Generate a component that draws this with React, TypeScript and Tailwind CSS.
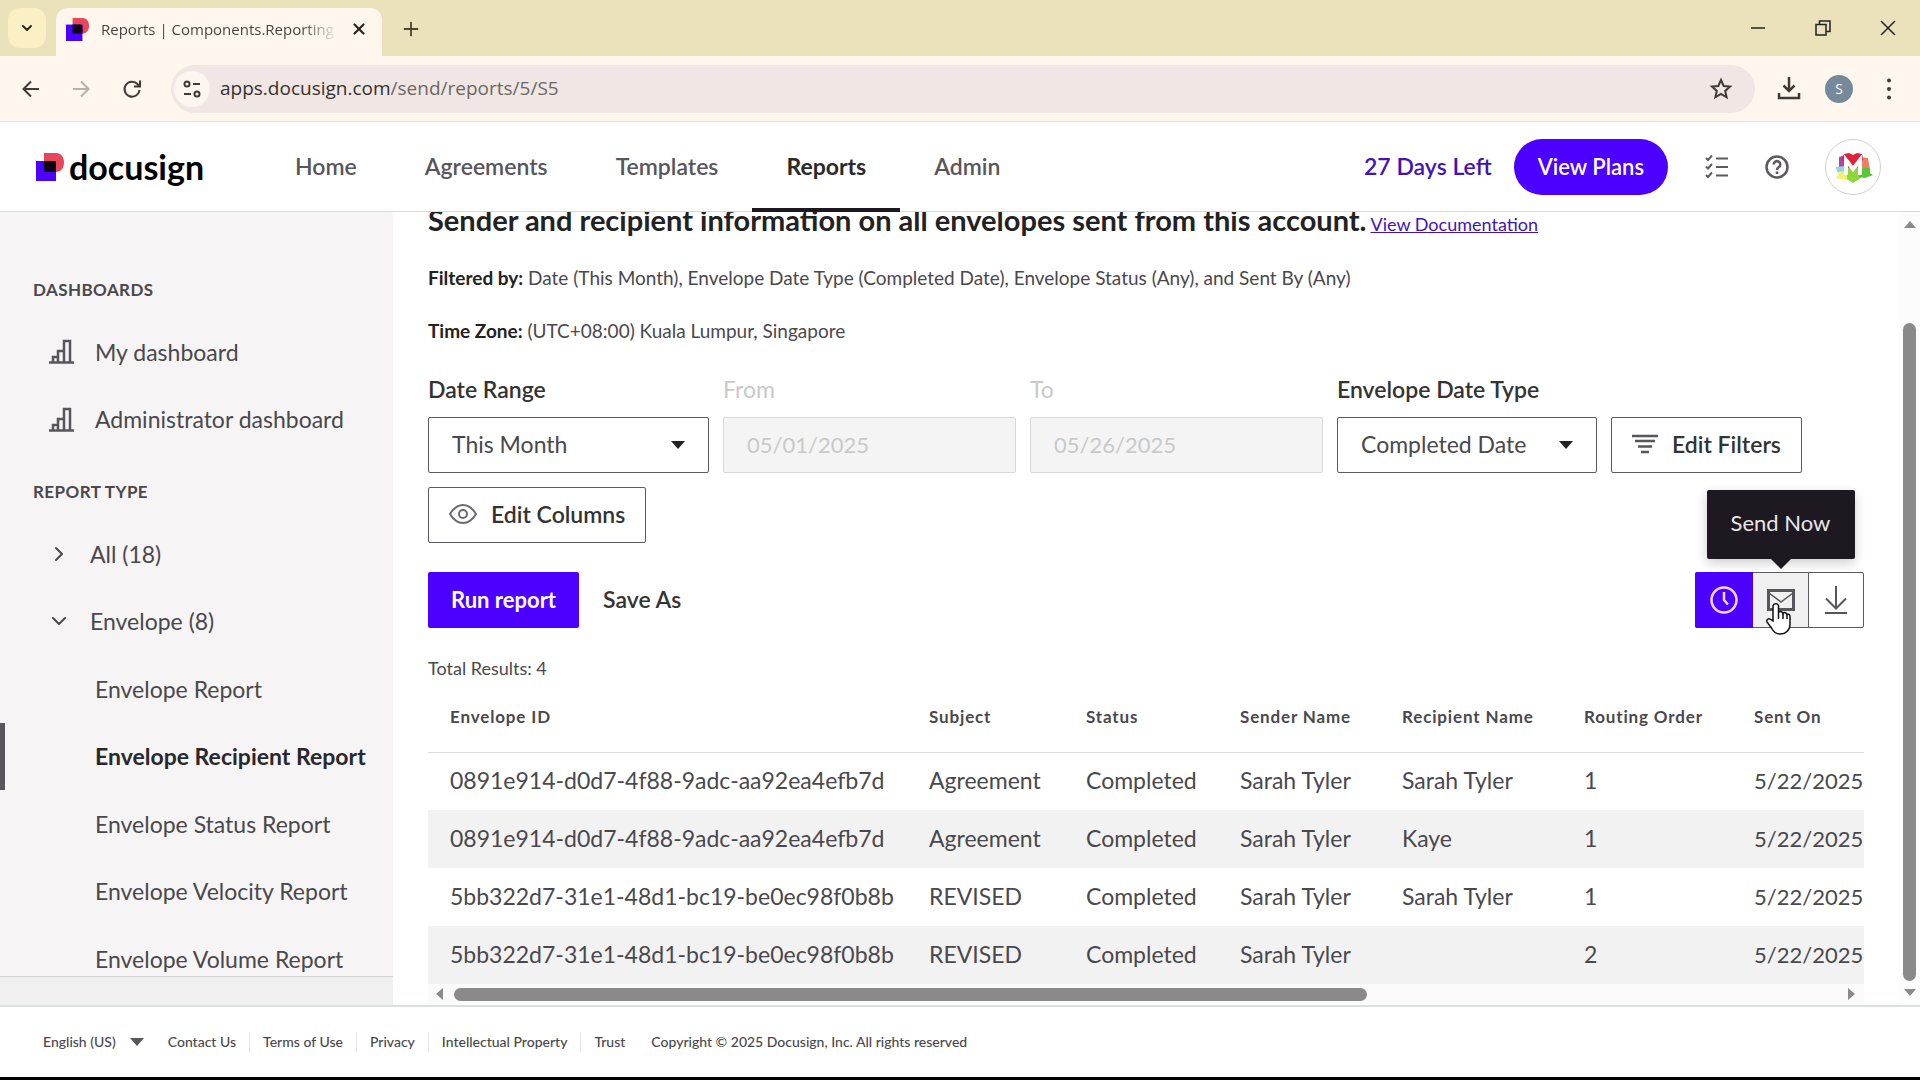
import type { ReactNode } from "react";
import { ChevronDown, ChevronRight, Plus, X } from "lucide-react";
import clsx from "clsx";

const navItems = ["Home", "Agreements", "Templates", "Reports", "Admin"];

const reports = [
  "Envelope Report",
  "Envelope Recipient Report",
  "Envelope Status Report",
  "Envelope Velocity Report",
  "Envelope Volume Report",
];

const columns = [
  { title: "Envelope ID", width: "w-[479px]" },
  { title: "Subject", width: "w-[157px]" },
  { title: "Status", width: "w-[154px]" },
  { title: "Sender Name", width: "w-[162px]" },
  { title: "Recipient Name", width: "w-[182px]" },
  { title: "Routing Order", width: "w-[170px]" },
  { title: "Sent On", width: "w-auto" },
];

const rows = [
  ["0891e914-d0d7-4f88-9adc-aa92ea4efb7d", "Agreement", "Completed", "Sarah Tyler", "Sarah Tyler", "1", "5/22/2025"],
  ["0891e914-d0d7-4f88-9adc-aa92ea4efb7d", "Agreement", "Completed", "Sarah Tyler", "Kaye", "1", "5/22/2025"],
  ["5bb322d7-31e1-48d1-bc19-be0ec98f0b8b", "REVISED", "Completed", "Sarah Tyler", "Sarah Tyler", "1", "5/22/2025"],
  ["5bb322d7-31e1-48d1-bc19-be0ec98f0b8b", "REVISED", "Completed", "Sarah Tyler", "", "2", "5/22/2025"],
];

const footerLinks = ["Contact Us", "Terms of Use", "Privacy", "Intellectual Property", "Trust"];

function LogoMark({ className }: { className: string }) {
  return (
    <svg viewBox="0 0 28 28" className={className} aria-hidden="true">
      <path d="M8 0h12c5 0 8 4 8 9.500s-3 9.500-8 9.500H8z" fill="#e8475a" />
      <path d="M0 8h20v20H0z" fill="#4c00ff" />
      <path d="M8 8h9c2 0 3 1 3 3v8H8z" fill="#0d0015" />
    </svg>
  );
}

function BrowserBar() {
  return (
    <div className="shrink-0 font-['Open_Sans',sans-serif]">
      <div className="flex h-14 items-end bg-[#ebe2bb] pl-2">
        <button aria-label="Search tabs" className="mb-2 grid h-10 w-[38px] place-items-center rounded-xl bg-[#fbf0c4]">
          <ChevronDown className="size-4 text-[#2b2720]" strokeWidth={3} />
        </button>
        <div className="ml-[10px] flex h-12 w-[326px] items-center rounded-t-xl bg-[#fff7ed] pr-[14px] pb-[6px] pl-[10px]">
          <LogoMark className="size-[23px] shrink-0" />
          <span className="ml-3 flex-1 overflow-hidden whitespace-nowrap bg-linear-to-r from-[#45403a] from-85% to-transparent bg-clip-text text-[15px] text-transparent">
            Reports | Components.Reporting
          </span>
          <button aria-label="Close tab" className="ml-3">
            <X className="size-[18px] text-[#2b2720]" strokeWidth={3} />
          </button>
        </div>
        <button aria-label="New tab" className="mb-4 ml-[18px]">
          <Plus className="size-[22px] text-[#4a4430]" />
        </button>
        <div className="mb-5 ml-auto flex items-center gap-[49px] pr-6 text-[#222]">
          <button aria-label="Minimize">
            <svg viewBox="0 0 16 16" className="size-4" fill="none" stroke="currentColor" strokeWidth="1.500">
              <path d="M1 8h14" />
            </svg>
          </button>
          <button aria-label="Restore">
            <svg viewBox="0 0 16 16" className="size-4" fill="none" stroke="currentColor" strokeWidth="1.500">
              <path d="M1 4.500h10V15H1zM4.500 4V1H15v10.500h-3.500" />
            </svg>
          </button>
          <button aria-label="Close window">
            <svg viewBox="0 0 16 16" className="size-4" fill="none" stroke="currentColor" strokeWidth="1.500">
              <path d="M1 1l14 14M15 1L1 15" />
            </svg>
          </button>
        </div>
      </div>
      <div className="flex h-[66px] items-center border-b border-[#e6e0d8] bg-[#fff7ed] pr-[21px] pl-[22px] text-[#3f3a35]">
        <button aria-label="Back">
          <svg viewBox="0 0 18 18" className="size-[18px]" fill="none" stroke="currentColor" strokeWidth="2">
            <path d="M17 9H2M9 1.500L1.500 9 9 16.500" />
          </svg>
        </button>
        <button aria-label="Forward" className="ml-8 text-[#b9b1a8]">
          <svg viewBox="0 0 18 18" className="size-[18px]" fill="none" stroke="currentColor" strokeWidth="2">
            <path d="M1 9h15M9 1.500L16.500 9 9 16.500" />
          </svg>
        </button>
        <button aria-label="Reload" className="ml-8">
          <svg viewBox="0 0 20 20" className="size-5" fill="none" stroke="currentColor" strokeWidth="2">
            <path d="M17.500 11A7.500 7.500 0 1 1 15.500 5L18 7.500M18 1.500v6h-6" />
          </svg>
        </button>
        <div className="ml-[29px] flex h-12 flex-1 items-center rounded-full bg-[#f0e6e3] pr-[22px] pl-[3px]">
          <button aria-label="View site information" className="grid size-9 place-items-center rounded-full bg-[#fdf5f0]">
            <svg viewBox="0 0 18 18" className="size-[18px]" fill="none" stroke="currentColor" strokeWidth="2">
              <circle cx="4" cy="4" r="2.500" />
              <path d="M10 4h7M1 14h7" />
              <circle cx="14" cy="14" r="2.500" />
            </svg>
          </button>
          <div className="ml-[10px] flex-1 text-[19px] text-[#6d6764]">
            <span className="text-[#36312f]">apps.docusign.com</span>/send/reports/5/S5
          </div>
          <button aria-label="Bookmark this tab">
            <svg viewBox="0 0 24 24" className="size-6" fill="none" stroke="currentColor" strokeWidth="2">
              <path d="M12 3l2.700 6 6.300.6-4.800 4.300 1.400 6.400L12 17l-5.600 3.300 1.400-6.400L3 9.600 9.300 9z" />
            </svg>
          </button>
        </div>
        <button aria-label="Downloads" className="ml-[22px]">
          <svg viewBox="0 0 24 24" className="size-6" fill="none" stroke="currentColor" strokeWidth="2.500">
            <path d="M12 0v14M6.500 8.500L12 14l5.500-5.500M2 16v5h20v-5" />
          </svg>
        </button>
        <button aria-label="Profile" className="ml-6 grid size-7 place-items-center rounded-full bg-[#75899a] text-sm text-white">
          S
        </button>
        <button aria-label="Browser menu" className="ml-[26px]">
          <svg viewBox="0 0 20 24" className="h-6 w-5" fill="currentColor">
            <circle cx="10" cy="3.500" r="2" />
            <circle cx="10" cy="12" r="2" />
            <circle cx="10" cy="20.500" r="2" />
          </svg>
        </button>
      </div>
    </div>
  );
}

function Avatar() {
  return (
    <svg viewBox="0 0 56 56" className="size-14">
      <circle cx="28" cy="28" r="27.500" fill="#fff" stroke="#cfcfcf" />
      <path d="M14 18l6-2 10 4v12H14z" fill="#b0479f" />
      <path d="M34 18l9 1 2 12-12 2-5-9z" fill="#ec7f62" />
      <path d="M19 15l5-1 4 2 4-2 5 1 1 5-5 8h-10l-6-8z" fill="#e3203c" />
      <path d="M11 29h17v8l-6 4-11-2 3-4z" fill="#f1f268" />
      <path d="M11 28l9-1v5l-8 1z" fill="#8fd3ee" />
      <path d="M22 29h13l3 8-5 4-5 3-6-4z" fill="#8fd63a" />
      <path d="M34 29h11v5l3 2-8 3-6-1z" fill="#5cc437" />
      <path d="M21 36V21l7 9 7-9v15" fill="none" stroke="#fff" strokeWidth="4" />
    </svg>
  );
}

function Header() {
  return (
    <header className="flex h-[90px] shrink-0 items-stretch border-b border-[#d9d9d9] bg-white pr-[39px] pl-9">
      <a href="#home" className="flex w-[225px] items-center text-black">
        <LogoMark className="size-7" />
        <span className="ml-[5px] text-[34px] leading-9 font-bold">docusign</span>
      </a>
      <nav className="flex">
        {navItems.map((item) => (
          <a
            key={item}
            href={`#${item.toLowerCase()}`}
            className={clsx(
              "relative flex items-center px-[34px] pb-px text-[23px]",
              item === "Reports" ? "font-bold text-[#2a2a2a]" : "font-semibold text-[#58565a]",
            )}
          >
            {item}
            {item === "Reports" && <span className="absolute inset-x-0 -bottom-px h-1 bg-[#1d171f]" />}
          </a>
        ))}
      </nav>
      <div className="ml-auto flex items-center text-[#5c5a5e]">
        <span className="text-[23px] font-semibold text-[#4213b8]">27 Days Left</span>
        <button className="ml-[22px] h-14 rounded-full bg-[#4c00ff] px-6 text-[22px] font-semibold text-white">
          View Plans
        </button>
        <button aria-label="Tasks" className="ml-[37px]">
          <svg viewBox="0 0 24 24" className="size-6" fill="none" stroke="currentColor" strokeWidth="2">
            <path d="M1 3l2 2 4-4.500M1 11.500l2 2L7 9M1 20l2 2 4-4.500M11 3.500h12M11 12h12M11 20.500h12" />
          </svg>
        </button>
        <button aria-label="Help" className="ml-9">
          <svg viewBox="0 0 24 24" className="size-6" fill="none" stroke="currentColor" strokeWidth="2.500">
            <circle cx="12" cy="12" r="10.500" />
            <path d="M8.700 9.500a3.300 3.300 0 1 1 5 2.800c-1.200.7-1.700 1.200-1.700 2.700M12 16.500v2.500" />
          </svg>
        </button>
        <button aria-label="Account" className="ml-9">
          <Avatar />
        </button>
      </div>
    </header>
  );
}

function ChartIcon() {
  return (
    <svg viewBox="0 0 25 25" className="size-[25px]" fill="none" stroke="#58565a" strokeWidth="2.500">
      <path d="M0 23.500h25M4 23v-5h5M9 23V12h6M15 23V2h6v21" />
    </svg>
  );
}

function Sidebar() {
  return (
    <aside className="flex w-[393px] shrink-0 flex-col bg-[#f1f0f1] text-[23px] text-[#4a484c]">
      <div className="min-h-0 flex-1 overflow-hidden border-b border-[#d3d3d3] bg-[#f6f4f5] pt-[66px]">
        <h2 className="pl-[33px] text-[17px] leading-6 font-bold tracking-wide">DASHBOARDS</h2>
        <ul className="mt-4 grid h-[135px] auto-rows-fr">
          {["My dashboard", "Administrator dashboard"].map((name) => (
            <li key={name}>
              <a href="#dashboard" className="flex h-full items-center gap-[21px] pl-[49px]">
                <ChartIcon />
                {name}
              </a>
            </li>
          ))}
        </ul>
        <h2 className="mt-[27px] pl-[33px] text-[17px] leading-6 font-bold tracking-wide">REPORT TYPE</h2>
        <ul className="mt-4 grid h-[473px] auto-rows-fr">
          <li>
            <button aria-expanded="false" className="flex h-full w-full items-center gap-[19px] pl-[47px]">
              <ChevronRight className="size-6" />
              All (18)
            </button>
          </li>
          <li>
            <button aria-expanded="true" className="flex h-full w-full items-center gap-[19px] pl-[47px]">
              <ChevronDown className="size-6" />
              Envelope (8)
            </button>
          </li>
          {reports.map((name) => (
            <li key={name}>
              <a
                href="#report"
                className={clsx(
                  "flex h-full items-center border-l-[5px] pl-[90px]",
                  name === "Envelope Recipient Report"
                    ? "border-[#58565a] font-bold text-[#2a282c]"
                    : "border-transparent",
                )}
              >
                {name}
              </a>
            </li>
          ))}
        </ul>
      </div>
      <div className="h-7 shrink-0" />
    </aside>
  );
}

function SelectField({ id, label, options, width }: { id: string; label: string; options: string[]; width: string }) {
  return (
    <div className={width}>
      <label htmlFor={id} className="block text-[23px] leading-8 font-semibold text-[#333]">
        {label}
      </label>
      <div className="relative mt-3">
        <select
          id={id}
          className="h-14 w-full appearance-none rounded-xs border border-[#5c5a5e] bg-white pb-[2px] pl-[23px] text-[#4a484c]"
        >
          {options.map((option) => (
            <option key={option}>{option}</option>
          ))}
        </select>
        <svg viewBox="0 0 14 8" className="pointer-events-none absolute top-6 right-6 h-2 w-[14px]" fill="#222">
          <path d="M0 0h14L7 8z" />
        </svg>
      </div>
    </div>
  );
}

function DateField({ id, label, value }: { id: string; label: string; value: string }) {
  return (
    <div className="w-[293px] text-[#c9c9c9]">
      <label htmlFor={id} className="block leading-8">
        {label}
      </label>
      <input
        id={id}
        disabled
        defaultValue={value}
        className="mt-3 h-14 w-full rounded-xs border border-[#d9d9d9] bg-[#f4f4f4] px-[23px] pb-[2px] text-[22px]"
      />
    </div>
  );
}

function OutlineButton({ icon, children }: { icon: ReactNode; children: ReactNode }) {
  return (
    <button className="flex h-14 items-center gap-[14px] rounded-xs border border-[#5c5a5e] bg-white px-5 pb-[2px] font-semibold text-[#333]">
      {icon}
      {children}
    </button>
  );
}

function Filters() {
  return (
    <div className="mt-7 flex flex-wrap items-end gap-[14px] text-[23px]">
      <SelectField id="date-range" label="Date Range" options={["This Month", "Last Month"]} width="w-[281px]" />
      <DateField id="from" label="From" value="05/01/2025" />
      <DateField id="to" label="To" value="05/26/2025" />
      <SelectField
        id="date-type"
        label="Envelope Date Type"
        options={["Completed Date", "Sent Date"]}
        width="w-[260px]"
      />
      <OutlineButton
        icon={
          <svg viewBox="0 0 26 20" className="h-5 w-[26px]" fill="none" stroke="#58565a" strokeWidth="2.500">
            <path d="M0 2h26M3 7h20M6 12.500h14M9 18h8" />
          </svg>
        }
      >
        Edit Filters
      </OutlineButton>
      <OutlineButton
        icon={
          <svg viewBox="0 0 28 20" className="h-5 w-7" fill="none" stroke="#6b696d" strokeWidth="2">
            <path d="M1 10C5 3.500 9 1 14 1s9 2.500 13 9c-4 6.500-8 9-13 9S5 16.500 1 10z" />
            <circle cx="14" cy="10" r="4" />
          </svg>
        }
      >
        Edit Columns
      </OutlineButton>
    </div>
  );
}

function Actions() {
  return (
    <div className="mt-[29px] flex items-center text-[22px]">
      <button className="h-14 rounded-xs bg-[#4c00ff] px-[23px] pb-[2px] font-bold text-white">Run report</button>
      <button className="ml-6 pb-[2px] text-[23px] font-semibold text-[#333]">Save As</button>
      <div className="ml-auto flex h-14 w-[169px] rounded-xs border border-[#5c5a5e]">
        <button aria-label="Schedule" className="-my-px -ml-px grid w-[58px] place-items-center rounded-l-xs bg-[#4c00ff]">
          <svg viewBox="0 0 28 28" className="size-7" fill="none" stroke="#fbd3ff" strokeWidth="2.500">
            <circle cx="14" cy="14" r="12.500" />
            <path d="M14 6v8l4 4.500" />
          </svg>
        </button>
        <div className="relative w-[55px] bg-[#f1f0f1]">
          <button aria-label="Send Now" className="grid size-full place-items-center">
            <svg viewBox="0 0 28 22" className="h-[22px] w-7" fill="none" stroke="#58565a">
              <path d="M1.500 1.500h25v19h-25z" strokeWidth="3" />
              <path d="M2 4l12 9 12-9" strokeWidth="1.500" />
            </svg>
          </button>
          <div
            role="tooltip"
            className="absolute bottom-[68px] left-1/2 flex h-[69px] w-[148px] -translate-x-1/2 items-center justify-center rounded-xs bg-[#1e1820] pb-1 whitespace-nowrap text-[#e9e7ea] shadow-[0_4px_12px_rgba(0,0,0,0.2)]"
          >
            Send Now
            <svg viewBox="0 0 20 10" className="absolute top-full left-1/2 h-[10px] w-5 -translate-x-1/2" fill="#1e1820">
              <path d="M0 0h20L10 10z" />
            </svg>
          </div>
          <svg viewBox="0 0 26 34" className="absolute top-7 left-3 h-[34px] w-[26px]" fill="#fff" stroke="#111" strokeWidth="1.500">
            <path d="M8 20V4.500a3 3 0 0 1 5.500 0V12c0-2 4-2 4.500.5 1-1.500 3.500-1 4 1 1-.8 3 0 3 2V23c0 6-4 10-10 10-5 0-7-3-8.500-6L2 21c-1-2.500 1.500-4 3.500-2.500z" />
            <path d="M13.500 12v6M18 12.500V18M22 13.500V18" />
          </svg>
        </div>
        <button aria-label="Download" className="grid flex-1 place-items-center border-l border-[#5c5a5e]">
          <svg viewBox="0 0 24 28" className="h-7 w-6" fill="none" stroke="#58565a" strokeWidth="2">
            <path d="M12 0v22M2 12.500l10 10 10-10M1 27h22" />
          </svg>
        </button>
      </div>
    </div>
  );
}

function ResultsTable() {
  return (
    <div className="overflow-hidden">
      <table className="w-full table-fixed text-left whitespace-nowrap text-[#4a484c]">
        <thead>
          <tr className="h-[70px] border-b border-[#dcdcdc]">
            {columns.map((column) => (
              <th key={column.title} className={clsx("pl-[22px] text-[17px] font-bold tracking-wider", column.width)}>
                {column.title}
              </th>
            ))}
          </tr>
        </thead>
        <tbody className="text-[23px]">
          {rows.map((row, i) => (
            <tr key={i} className="h-[58px] even:bg-[#f2f2f2]">
              {row.map((cell, j) => (
                <td key={j} className="pb-[2px] pl-[22px] last:text-[22px]">
                  {cell}
                </td>
              ))}
            </tr>
          ))}
        </tbody>
      </table>
      <div className="flex h-5 items-center bg-[#fafafa] pr-[9px] pl-2">
        <svg viewBox="0 0 7 12" className="h-3 w-[7px]" fill="#8a8a8a">
          <path d="M7 0v12L0 6z" />
        </svg>
        <div className="mx-[11px] flex-1">
          <div className="h-[13px] w-[66%] rounded-full bg-[#8a8a8a]" />
        </div>
        <svg viewBox="0 0 7 12" className="h-3 w-[7px]" fill="#8a8a8a">
          <path d="M0 0v12l7-6z" />
        </svg>
      </div>
    </div>
  );
}

function PageScrollbar() {
  return (
    <div className="flex w-[21px] shrink-0 flex-col items-center bg-[#fcfcfc] py-[9px]">
      <svg viewBox="0 0 12 7" className="h-[7px] w-3 shrink-0" fill="#8a8a8a">
        <path d="M0 7h12L6 0z" />
      </svg>
      <div className="mt-[95px] mb-2 w-[13px] flex-1 rounded-full bg-[#8a8a8a]" />
      <svg viewBox="0 0 12 7" className="h-[7px] w-3 shrink-0" fill="#8a8a8a">
        <path d="M0 0h12L6 7z" />
      </svg>
    </div>
  );
}

function Footer() {
  return (
    <footer className="flex h-[75px] shrink-0 items-center border-t-2 border-b-3 border-t-[#dcdfdf] border-b-black bg-white pl-[43px] text-sm font-medium text-[#4a484c]">
      <button className="flex items-center gap-[14px]">
        English (US)
        <svg viewBox="0 0 14 8" className="h-2 w-[14px]" fill="#58565a">
          <path d="M0 0h14L7 8z" />
        </svg>
      </button>
      <ul className="ml-6 flex">
        {footerLinks.map((link) => (
          <li key={link} className="mr-[13px] border-r border-[#e4e4e4] pr-[13px] last:border-0">
            <a href="#legal">{link}</a>
          </li>
        ))}
      </ul>
      <p>Copyright © 2025 Docusign, Inc. All rights reserved</p>
    </footer>
  );
}

export default function App() {
  return (
    <div className="flex h-screen flex-col overflow-hidden bg-white font-['Lato',sans-serif]">
      <BrowserBar />
      <Header />
      <div className="flex min-h-0 flex-1">
        <Sidebar />
        <main className="min-w-0 flex-1 overflow-hidden px-[35px] text-[#4a484c]">
          <div className="-mt-2 flex items-baseline gap-1">
            <h1 className="text-[29px] leading-8 font-bold text-[#222]">
              Sender and recipient information on all envelopes sent from this account.
            </h1>
            <a href="#docs" className="text-lg text-[#4213b8] underline">
              View Documentation
            </a>
          </div>
          <p className="mt-[26px] text-[19px] leading-7">
            <strong className="text-[#222]">Filtered by:</strong> Date (This Month), Envelope Date Type (Completed Date),
            Envelope Status (Any), and Sent By (Any)
          </p>
          <p className="mt-[25px] text-[19px] leading-7">
            <strong className="text-[#222]">Time Zone:</strong> (UTC+08:00) Kuala Lumpur, Singapore
          </p>
          <Filters />
          <Actions />
          <p className="mt-[26px] text-lg leading-7">Total Results: 4</p>
          <ResultsTable />
        </main>
        <PageScrollbar />
      </div>
      <Footer />
    </div>
  );
}
